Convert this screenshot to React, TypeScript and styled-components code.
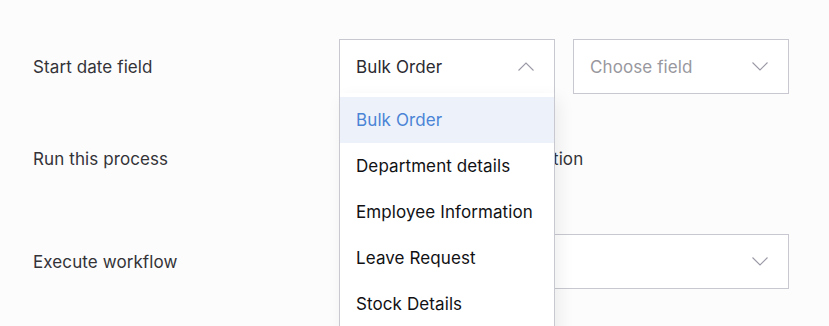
import React from 'react';
import styled, { createGlobalStyle } from 'styled-components';

const GlobalStyle = createGlobalStyle`
  body {
    margin: 0;
    background: #fcfcfc;
    font-family: Inter, 'Noto Sans', sans-serif;
  }
`;

const Page = styled.div`
  display: flex;
  flex-direction: column;
  height: 326px;
  overflow: hidden;
  padding: 39px 0 0 33px;
  box-sizing: border-box;
`;

const Row = styled.div<{ height: number; offset?: number }>`
  display: grid;
  grid-template-columns: 306px 1fr;
  align-items: center;
  height: ${(p) => p.height}px;
  margin-top: ${(p) => p.offset || 0}px;
  flex-shrink: 0;
`;

const Label = styled.div`
  font-size: 17px;
  letter-spacing: 0.1px;
  color: #333338;
`;

const Fields = styled.div`
  display: flex;
  gap: 18px;
  align-items: center;
`;

const SelectWrap = styled.div`
  position: relative;
  z-index: 2;
`;

const Select = styled.div<{ width: number; placeholder?: boolean }>`
  box-sizing: border-box;
  display: flex;
  align-items: center;
  justify-content: space-between;
  width: ${(p) => p.width}px;
  height: 55px;
  padding: 0 20px 0 16px;
  background: #fff;
  border: 1px solid #c8c8d0;
  font-size: 17px;
  letter-spacing: 0.1px;
  color: ${(p) => (p.placeholder ? '#98989e' : '#2a2a30')};
`;

const Menu = styled.div`
  position: absolute;
  top: 54px;
  left: 0;
  width: 216px;
  box-sizing: border-box;
  padding-top: 4px;
  background: #fff;
  border: 1px solid #c8c8d0;
  border-top: none;
  box-shadow: 4px 6px 16px rgba(0, 0, 0, 0.07);
`;

const Item = styled.div<{ active?: boolean }>`
  height: 46px;
  display: flex;
  align-items: center;
  padding-left: 16px;
  font-size: 17px;
  letter-spacing: 0.1px;
  color: ${(p) => (p.active ? '#4a84d6' : '#111114')};
  background: ${(p) => (p.active ? '#edf2fa' : '#fff')};
`;

const Option = styled.div`
  font-size: 17px;
  letter-spacing: 0.1px;
  color: #333338;
  white-space: nowrap;
`;

const Chevron = ({ up }: { up?: boolean }) => (
  <svg width="16" height="9" viewBox="0 0 16 9" fill="none">
    <path
      d={up ? 'M0.5 8.5 L8 1 L15.5 8.5' : 'M0.5 0.5 L8 8 L15.5 0.5'}
      stroke="#9a9aa6"
      strokeWidth="1.1"
    />
  </svg>
);

const items = [
  'Bulk Order',
  'Department details',
  'Employee Information',
  'Leave Request',
  'Stock Details',
  'Vendor Details',
];

export default function App() {
  return (
    <>
      <GlobalStyle />
      <Page>
        <Row height={55}>
          <Label>Start date field</Label>
          <Fields>
            <SelectWrap>
              <Select width={216}>
                Bulk Order
                <Chevron up />
              </Select>
              <Menu>
                {items.map((it, i) => (
                  <Item key={it} active={i === 0}>
                    {it}
                  </Item>
                ))}
              </Menu>
            </SelectWrap>
            <Select width={216} placeholder>
              Choose field
              <Chevron />
            </Select>
          </Fields>
        </Row>
        <Row height={130}>
          <Label>Run this process</Label>
          <Option>Once for each record creation</Option>
        </Row>
        <Row height={55} offset={10}>
          <Label>Execute workflow</Label>
          <Select width={450}>
            <span />
            <Chevron />
          </Select>
        </Row>
      </Page>
    </>
  );
}
